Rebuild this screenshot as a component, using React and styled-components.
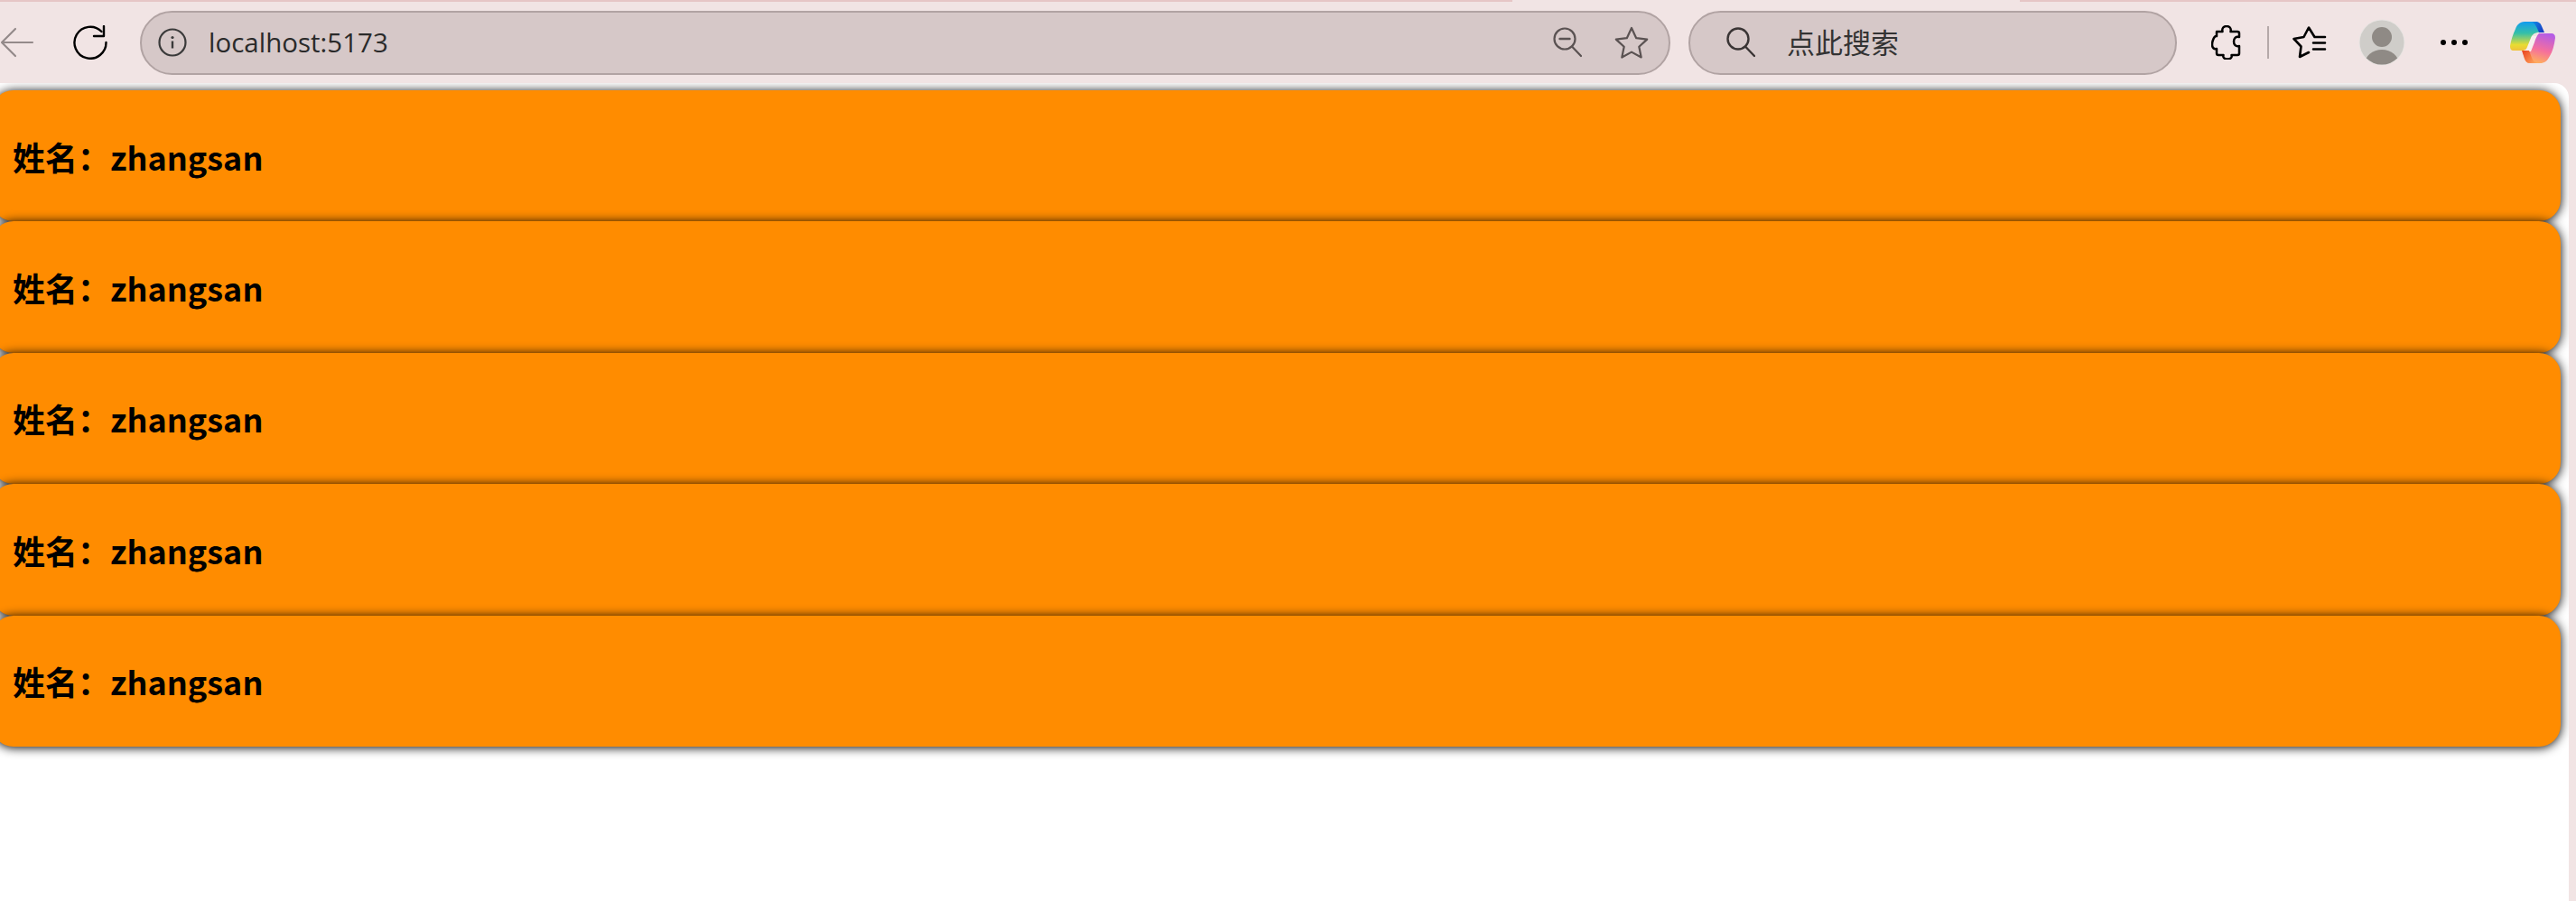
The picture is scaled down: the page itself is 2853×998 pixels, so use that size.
import React from "react";
import styled, { createGlobalStyle } from "styled-components";

const Global = createGlobalStyle`
  html, body { margin: 0; padding: 0; height: 100%; overflow: hidden; background: #f1e4e4; }
  #root { height: 100%; }
`;

const Frame = styled.div`
  display: flex;
  flex-direction: column;
  height: 998px;
  width: 2853px;
  background: #f1e4e4;
`;

const TabEdge = styled.div`
  display: flex;
  justify-content: space-between;
  height: 2px;
  flex: none;
`;

const TabEdgePiece = styled.div`
  width: ${(p) => p.$width}px;
  background: #e6c6c6;
`;

const Toolbar = styled.header`
  display: flex;
  align-items: center;
  height: 90px;
  flex: none;
  font-family: "Open Sans", "Noto Sans CJK SC", sans-serif;
`;

const ToolIcon = styled.span`
  display: flex;
  align-items: center;
  justify-content: center;
  flex: none;
  width: ${(p) => p.$width}px;
  margin-left: ${(p) => p.$gap || 0}px;
`;

const Pill = styled.div`
  display: flex;
  align-items: center;
  box-sizing: border-box;
  flex: none;
  height: 71px;
  width: ${(p) => p.$width}px;
  margin-left: ${(p) => p.$gap}px;
  background: #d6c8c8;
  border: 2px solid #b1a3a3;
  border-radius: 36px;
`;

const AddressText = styled.span`
  margin-left: 24px;
  padding-bottom: 2px;
  font-size: 29.5px;
  color: #2a2a2a;
  flex: 1;
`;

const SearchText = styled.span`
  margin-left: 35px;
  padding-bottom: 3px;
  font-family: "Noto Sans CJK SC", sans-serif;
  font-size: 31px;
  font-weight: 400;
  color: #333;
  flex: 1;
`;

const Divider = styled.span`
  flex: none;
  width: 2px;
  height: 36px;
  margin-left: 28px;
  background: #b5a9a9;
`;

const Page = styled.main`
  flex: 1;
  margin-right: 8px;
  padding-top: 8px;
  background: #fff;
  border-top-right-radius: 16px;
  overflow: hidden;
`;

const Card = styled.section`
  display: flex;
  align-items: center;
  box-sizing: border-box;
  height: 145.4px;
  margin: 0 9px 0 -9px;
  padding: 0 0 0 23px;
  background: #ff8c00;
  border-radius: 24px;
  box-shadow: 0 1px 12px #000;
  position: relative;
`;

const CardText = styled.span`
  font-family: "Noto Sans CJK SC", sans-serif;
  font-size: 36px;
  font-weight: 700;
  color: #000;
`;

const line = { fill: "none", strokeLinecap: "round", strokeLinejoin: "round" };

const BackIcon = () => (
  <svg width="38" height="36" viewBox="0 0 38 36">
    <path {...line} d="M36 18H3M17 3 2 18l15 15" stroke="#948a8a" strokeWidth="2.2" />
  </svg>
);

const ReloadIcon = () => (
  <svg width="38" height="38" viewBox="0 0 38 38">
    <path {...line} d="M31.500 7A17.500 17.500 0 1 0 36.500 19" stroke="#000" strokeWidth="2.4" />
    <path {...line} d="M34 1v11H23" stroke="#000" strokeWidth="2.4" />
  </svg>
);

const InfoIcon = () => (
  <svg width="32" height="32" viewBox="0 0 32 32">
    <circle cx="16" cy="16" r="14.500" fill="none" stroke="#3a3a3a" strokeWidth="2.200" />
    <path d="M16 14.500v8" stroke="#3a3a3a" strokeWidth="2.400" />
    <circle cx="16" cy="10.500" r="1.600" fill="#3a3a3a" />
  </svg>
);

const ZoomOutIcon = () => (
  <svg width="32" height="34" viewBox="0 0 32 34">
    <circle cx="13" cy="13" r="11.500" fill="none" stroke="#5a5252" strokeWidth="2.200" />
    <path {...line} d="M7.500 13h11" stroke="#5a5252" strokeWidth="2.400" />
    <path {...line} d="M21 21.500 31 32" stroke="#5a5252" strokeWidth="2.200" />
  </svg>
);

const StarIcon = () => (
  <svg width="38" height="36" viewBox="0 0 38 36">
    <path
      {...line}
      d="M19 2l5.200 11.200 12 1.400-8.900 8.200 2.400 11.700L19 28.600 8.300 34.500l2.400-11.700-8.900-8.200 12-1.400z"
      stroke="#5a5252"
      strokeWidth="2.200"
    />
  </svg>
);

const SearchIcon = () => (
  <svg width="32" height="34" viewBox="0 0 32 34">
    <circle cx="13" cy="13" r="11.500" fill="none" stroke="#3a3535" strokeWidth="2.400" />
    <path {...line} d="M21 21.500 31 32" stroke="#3a3535" strokeWidth="2.400" />
  </svg>
);

const PuzzleIcon = () => (
  <svg width="34" height="38" viewBox="0 0 34 38">
    <path
      {...line}
      stroke="#000"
      strokeWidth="2.500"
      d="M6 7h6.500c-1-4 1.500-6 4.500-6s5.500 2 4.500 6H29a2 2 0 0 1 2 2v4c-4-1-6 1.500-6 5s2 6 6 5v8a2 2 0 0 1-2 2h-6.500c1 3-1.500 4.500-4.500 4.500s-5.500-1.500-4.500-4.500H8a2 2 0 0 1-2-2v-5c-3 1-5-1.500-5-4.500S3 11 6 12z"
    />
  </svg>
);

const StarListIcon = () => (
  <svg width="38" height="36" viewBox="0 0 38 36">
    <path
      {...line}
      stroke="#000"
      strokeWidth="2.600"
      d="M36 12H24.500L18 1.500 12.500 12 1.500 14l8 8.500L8 34l10-5M23 18.500h13M23 25.500h13"
    />
  </svg>
);

const AvatarIcon = () => (
  <svg width="52" height="52" viewBox="0 0 52 52">
    <defs>
      <clipPath id="avatar-clip">
        <circle cx="26" cy="26" r="24.500" />
      </clipPath>
    </defs>
    <circle cx="26" cy="26" r="25.500" fill="#e8e4e2" />
    <circle cx="26" cy="26" r="24.500" fill="#cfcdc9" />
    <g clipPath="url(#avatar-clip)">
      <circle cx="26" cy="20" r="11" fill="#8f8a85" />
      <ellipse cx="26" cy="50" rx="19" ry="16" fill="#8f8a85" />
    </g>
  </svg>
);

const MoreIcon = () => (
  <svg width="32" height="8" viewBox="0 0 32 8">
    <circle cx="4" cy="4" r="3" fill="#000" />
    <circle cx="16" cy="4" r="3" fill="#000" />
    <circle cx="28" cy="4" r="3" fill="#000" />
  </svg>
);

const CopilotIcon = () => (
  <svg width="50" height="48" viewBox="0 0 50 48">
    <defs>
      <linearGradient id="cop-a" x1="0" y1="0" x2="0" y2="1">
        <stop offset="0" stopColor="#0f9bf0" />
        <stop offset="0.4" stopColor="#35c0a8" />
        <stop offset="0.8" stopColor="#e8dc32" />
        <stop offset="1" stopColor="#f0c23c" />
      </linearGradient>
      <linearGradient id="cop-b" x1="0.7" y1="0" x2="0.4" y2="1">
        <stop offset="0" stopColor="#b45ce6" />
        <stop offset="0.55" stopColor="#f56f9d" />
        <stop offset="1" stopColor="#ffb25a" />
      </linearGradient>
      <linearGradient id="cop-c" x1="0" y1="0" x2="1" y2="0.6">
        <stop offset="0" stopColor="#0f8fe8" />
        <stop offset="1" stopColor="#1a3fc4" />
      </linearGradient>
      <linearGradient id="cop-d" x1="0" y1="0" x2="1" y2="0.7">
        <stop offset="0" stopColor="#e8401f" />
        <stop offset="1" stopColor="#ffa05a" />
      </linearGradient>
    </defs>
    <path fill="#f8f0ee" d="M20 17h14l-8 18h-12z" />
    <path fill="url(#cop-a)" d="M18 1h8c4 0 6 2 7 5l3 7c-7-1-11 1-13 6l-4 10c-1 3-3 4-6 4H4c-3 0-4-2-4-5 1-6 3-13 6-19C8 4 11 1 18 1z" />
    <path fill="url(#cop-c)" d="M24 1h4c4 0 6 2 7 5l3 7h-6c-2-5-4-10-8-12z" />
    <path fill="url(#cop-b)" d="M32 14h13c4 0 5 2 5 5-1 8-3 15-6 20-3 6-6 8-11 8H22c-3 0-5-2-6-5l-2-8h9l4-10c1-4 3-8 5-10z" />
    <path fill="url(#cop-d)" d="M13 33h8l3 8c1 3 3 5 6 6h-8c-3 0-5-2-6-5z" />
  </svg>
);

const names = [0, 1, 2, 3, 4];

export default function App() {
  return (
    <Frame>
      <Global />
      <TabEdge>
        <TabEdgePiece $width={1675} />
        <TabEdgePiece $width={616} />
      </TabEdge>
      <Toolbar>
        <ToolIcon $width={38}><BackIcon /></ToolIcon>
        <ToolIcon $width={38} $gap={43}><ReloadIcon /></ToolIcon>
        <Pill $width={1695} $gap={36}>
          <ToolIcon $width={32} $gap={18}><InfoIcon /></ToolIcon>
          <AddressText>localhost:5173</AddressText>
          <ToolIcon $width={32}><ZoomOutIcon /></ToolIcon>
          <ToolIcon $width={38} $gap={36}><StarIcon /></ToolIcon>
          <ToolIcon $width={22} />
        </Pill>
        <Pill $width={541} $gap={20}>
          <ToolIcon $width={32} $gap={40}><SearchIcon /></ToolIcon>
          <SearchText>点此搜索</SearchText>
        </Pill>
        <ToolIcon $width={34} $gap={38}><PuzzleIcon /></ToolIcon>
        <Divider />
        <ToolIcon $width={38} $gap={26}><StarListIcon /></ToolIcon>
        <ToolIcon $width={52} $gap={35}><AvatarIcon /></ToolIcon>
        <ToolIcon $width={32} $gap={38}><MoreIcon /></ToolIcon>
        <ToolIcon $width={50} $gap={46}><CopilotIcon /></ToolIcon>
      </Toolbar>
      <Page>
        {names.map((n) => (
          <Card key={n}>
            <CardText>姓名：zhangsan</CardText>
          </Card>
        ))}
      </Page>
    </Frame>
  );
}
